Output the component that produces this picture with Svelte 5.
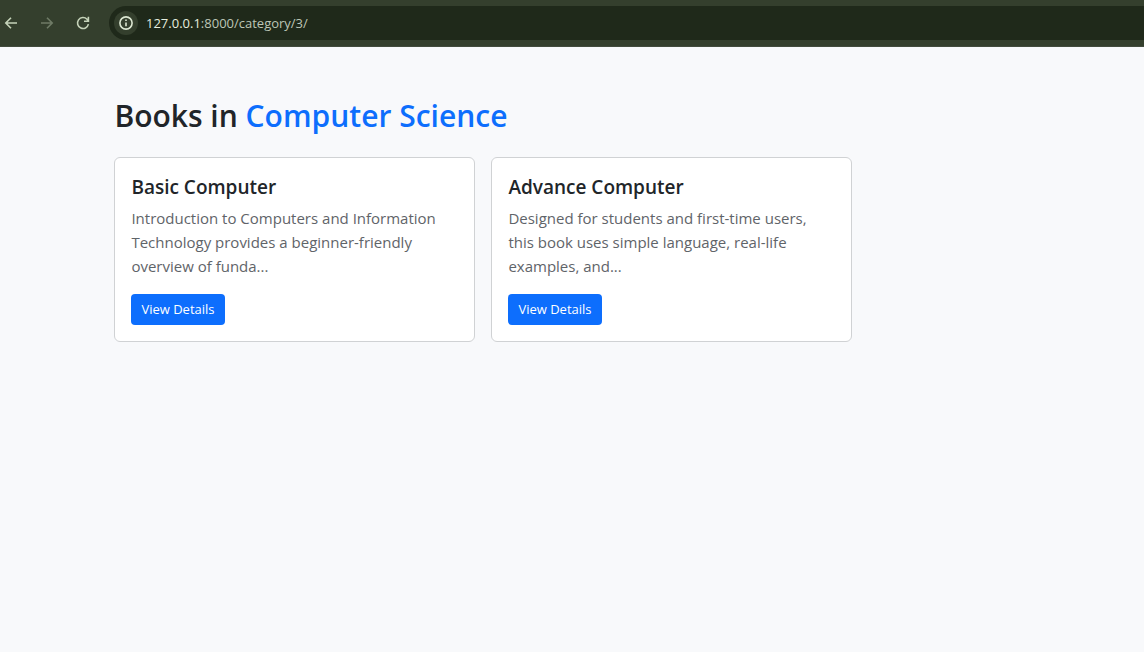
<script>
  const category = 'Computer Science';
  const books = [
    {
      id: 1,
      title: 'Basic Computer',
      lines: ['Introduction to Computers and Information', 'Technology provides a beginner-friendly', 'overview of funda...']
    },
    {
      id: 2,
      title: 'Advance Computer',
      lines: ['Designed for students and first-time users,', 'this book uses simple language, real-life', 'examples, and...']
    }
  ];
</script>

<header class="toolbar">
  <button class="nav" aria-label="Back">
    <svg viewBox="0 0 16 16"><path d="M14 8H3M8 2.8L2.8 8L8 13.2" /></svg>
  </button>
  <button class="nav" aria-label="Forward" disabled>
    <svg viewBox="0 0 16 16"><path d="M2 8H13M8 2.8L13.2 8L8 13.2" /></svg>
  </button>
  <button class="nav" aria-label="Reload">
    <svg viewBox="0 0 16 16"><path d="M13.4 9.2A5.5 5.5 0 1 1 12 4.2L13.4 5.8M13.4 1.8V6.2H9" /></svg>
  </button>
  <div class="address">
    <button class="info" aria-label="Site information">
      <svg viewBox="0 0 16 16"><circle cx="8" cy="8" r="6.1" /><path d="M8 7.4V11.2M8 4.6V6.1" /></svg>
    </button>
    <a class="url" href="/category/3/"><span>127.0.0.1</span>:8000/category/3/</a>
  </div>
</header>

<main>
  <h2>Books in <span>{category}</span></h2>
  <div class="books">
    {#each books as book (book.id)}
      <article class="card">
        <h5>{book.title}</h5>
        <p>
          {#each book.lines as line}<span>{line}</span>{' '}{/each}
        </p>
        <a class="details" href="/book/{book.id}/">View Details</a>
      </article>
    {/each}
  </div>
</main>

<style>
  :global(body) {
    background: #f8f9fb;
    color: #212529;
    font-family: 'Open Sans', 'Noto Sans', sans-serif;
    font-size: 15px;
    line-height: 24px;
  }
  .toolbar {
    display: flex;
    align-items: center;
    height: 46px;
    background: #343f2d;
    border-bottom: 1px solid #424b3d;
  }
  button {
    display: flex;
    align-items: center;
    justify-content: center;
    padding: 0;
    border: 0;
    background: none;
    color: #c5d3b9;
  }
  .nav {
    width: 36px;
    height: 32px;
    flex: none;
  }
  .nav:first-child {
    width: 29px;
    padding-right: 7px;
  }
  .nav:disabled {
    color: #6f7b66;
  }
  svg {
    width: 16px;
    height: 16px;
    flex: none;
    fill: none;
    stroke: currentColor;
    stroke-width: 1.6;
  }
  .address {
    display: flex;
    flex: 1;
    align-items: center;
    gap: 8px;
    height: 34px;
    margin-left: 8px;
    padding-left: 5px;
    border-radius: 17px 0 0 17px;
    background: #1f291a;
  }
  .info {
    width: 24px;
    height: 24px;
    border-radius: 50%;
    background: #343f2d;
    color: #dce7d2;
  }
  .url {
    color: #bdc6b6;
    font-size: 13px;
    line-height: 20px;
    text-decoration: none;
  }
  .url span {
    color: #e6eddf;
  }
  main {
    padding: 48px 10%;
  }
  h2 {
    margin: 0 0 20px;
    font-size: 30px;
    font-weight: 600;
    line-height: 42px;
  }
  h2 span {
    color: #0d6efd;
  }
  .books {
    display: grid;
    grid-template-columns: repeat(2, minmax(0, 361px));
    gap: 16px;
  }
  .card {
    padding: 16px;
    border: 1px solid #d0d2d4;
    border-radius: 6px;
    background: #fff;
  }
  h5 {
    margin: 0 0 6px;
    font-size: 19px;
    font-weight: 600;
    line-height: 26px;
  }
  p {
    margin: 0 0 16px;
    color: #5f6469;
  }
  p span {
    display: block;
  }
  .details {
    display: block;
    width: fit-content;
    padding: 5px 10px;
    border-radius: 4px;
    background: #0d6efd;
    color: #fff;
    font-size: 13px;
    line-height: 21px;
    text-decoration: none;
  }
</style>
